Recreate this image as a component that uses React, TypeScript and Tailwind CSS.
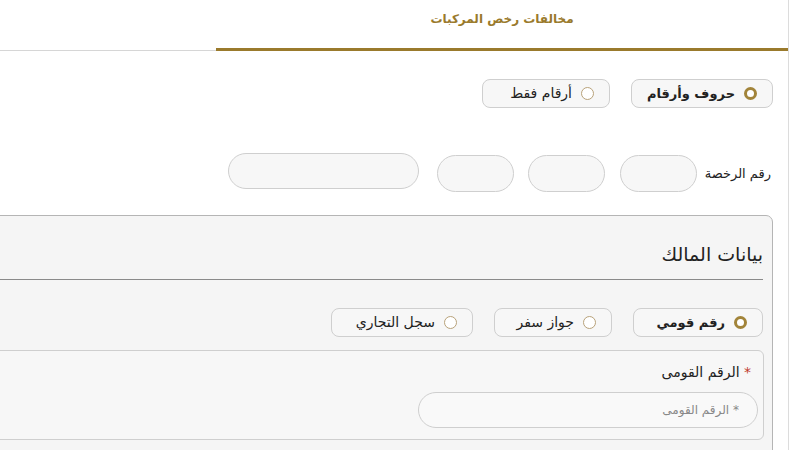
import React, { useState } from 'react';

const font = { fontFamily: '"DejaVu Sans", "Noto Sans", sans-serif' };

interface RadioPillProps {
  label: string;
  checked: boolean;
  onSelect: () => void;
  className?: string;
}

const RadioPill: React.FC<RadioPillProps> = ({ label, checked, onSelect, className }) => (
  <button
    type="button"
    onClick={onSelect}
    className={`flex h-[29px] items-center gap-[9px] whitespace-nowrap rounded-[8px] border border-[#cfcfcf] bg-[#f7f7f7] pr-[15px] pl-[10px] ${className ?? ''}`}
  >
    {checked ? (
      <span className="block h-[13px] w-[13px] shrink-0 rounded-full border-[3px] border-[#a2843a] bg-white" />
    ) : (
      <span className="block h-[13px] w-[13px] shrink-0 rounded-full border border-[#b8a27a] bg-white" />
    )}
    <span className={`text-[#222] ${checked ? 'text-[13px] font-bold' : 'text-[14px]'}`}>{label}</span>
  </button>
);

export default function App() {
  const [plateType, setPlateType] = useState<'mixed' | 'digits'>('mixed');
  const [idType, setIdType] = useState<'national' | 'passport' | 'commercial'>('national');

  return (
    <div dir="rtl" style={font} className="h-[450px] w-[800px] overflow-hidden bg-white">
      <div className="mr-[11px] h-full w-[789px] overflow-hidden border-r border-[#dcdcdc]">
        {/* Tabs */}
        <div className="flex h-[51px]">
          <div className="w-[572px] border-b-[3px] border-[#9a7a2c] pt-[6px] text-center">
            <span className="text-[12px] font-bold text-[#9a7a2c]">مخالفات رخص المركبات</span>
          </div>
          <div className="flex-1 border-b border-[#d6d6d6]" />
        </div>

        {/* Plate type */}
        <div className="mt-[28px] mr-[15px] flex gap-[21px]">
          <RadioPill label="حروف وأرقام" checked={plateType === 'mixed'} onSelect={() => setPlateType('mixed')} className="w-[142px]" />
          <RadioPill label="أرقام فقط" checked={plateType === 'digits'} onSelect={() => setPlateType('digits')} className="w-[128px]" />
        </div>

        {/* License number */}
        <div className="mt-[47px] mr-[17px] flex items-center">
          <span className="ml-[8px] text-[13px] text-[#222]">رقم الرخصة</span>
          <input className="h-[37px] w-[77px] rounded-full border border-[#cfcfcf] bg-[#f7f7f7] outline-none" />
          <input className="mr-[15px] h-[37px] w-[77px] rounded-full border border-[#cfcfcf] bg-[#f7f7f7] outline-none" />
          <input className="mr-[14px] h-[37px] w-[77px] rounded-full border border-[#cfcfcf] bg-[#f7f7f7] outline-none" />
          <input className="mr-[18px] -mt-[6px] h-[36px] w-[191px] rounded-full border border-[#cfcfcf] bg-[#f7f7f7] outline-none" />
        </div>

        {/* Owner card */}
        <div className="mt-[23px] mr-[15px] -ml-[10px] rounded-tr-[7px] border border-[#b5b5b5] bg-[#f5f5f5] pr-[9px]">
          <div className="pt-[26px] pb-[13px] text-[19px] leading-[24px] text-[#222]">بيانات المالك</div>
          <div className="border-t border-[#8a8a8a]" />

          <div className="mt-[28px] flex gap-[21px]">
            <RadioPill label="رقم قومي" checked={idType === 'national'} onSelect={() => setIdType('national')} className="w-[130px]" />
            <RadioPill label="جواز سفر" checked={idType === 'passport'} onSelect={() => setIdType('passport')} className="w-[118px]" />
            <RadioPill label="سجل التجاري" checked={idType === 'commercial'} onSelect={() => setIdType('commercial')} className="w-[142px]" />
          </div>

          <div className="mt-[13px] ml-0 mr-[-1px] h-[90px] rounded-[6px] border border-[#cfcfcf] bg-[#f7f7f7] pr-[12px] pt-[11px]">
            <div className="text-[14px] text-[#222]">
              <span className="text-[#c0392b]">*</span> الرقم القومى
            </div>
            <input
              placeholder="* الرقم القومى"
              className="mt-[9px] -mr-[7px] h-[36px] w-[340px] rounded-full border border-[#cfcfcf] bg-[#f9f9f9] px-[18px] text-[12px] outline-none placeholder:text-[#888]"
            />
          </div>
          <div className="h-[40px]" />
        </div>
      </div>
    </div>
  );
}
